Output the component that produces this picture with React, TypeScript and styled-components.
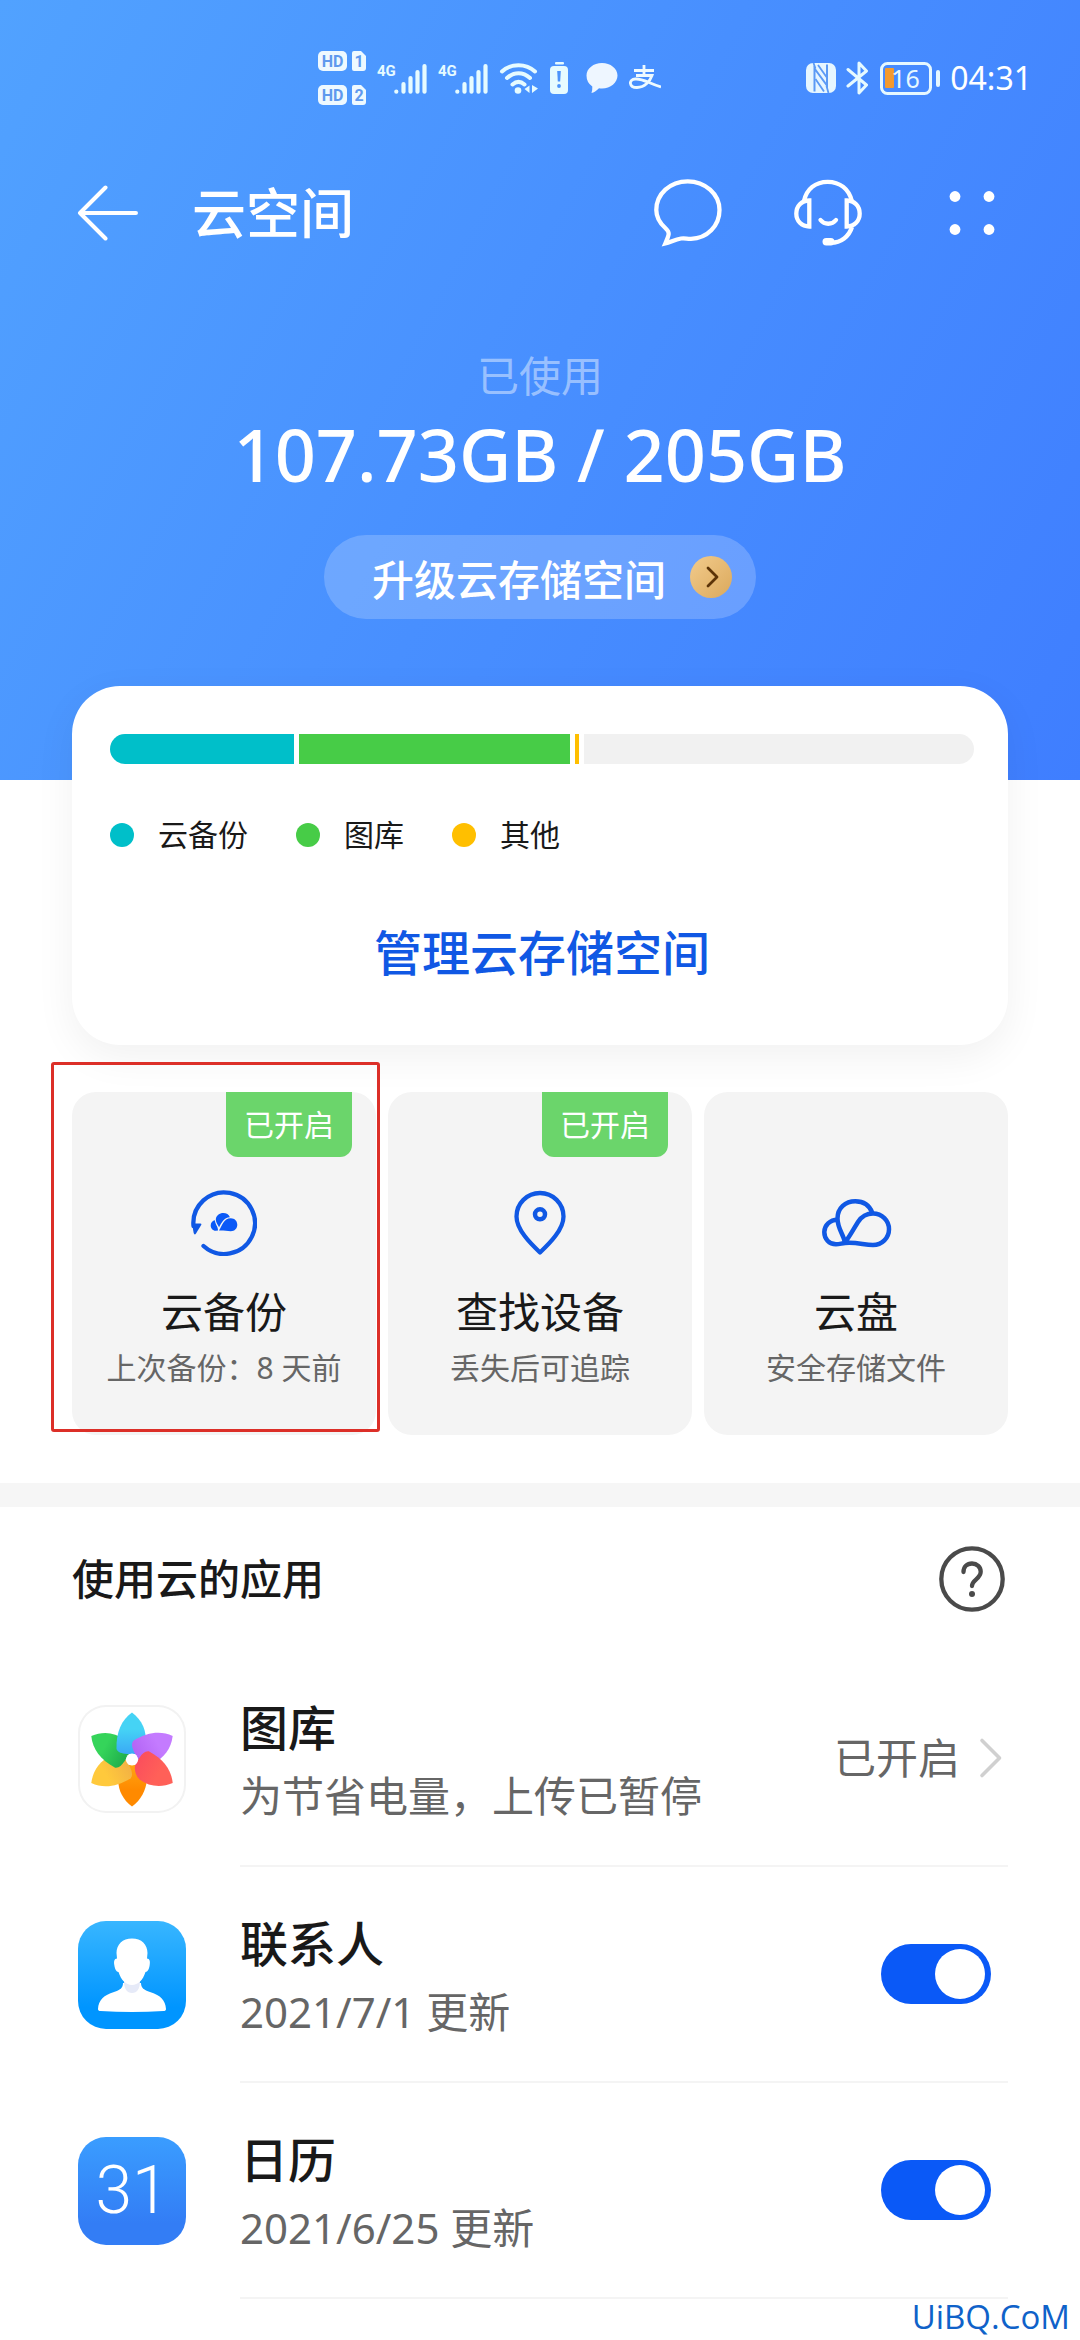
import React from "react";
import styled, { createGlobalStyle } from "styled-components";

const BLUE = "#0a59f7";
const INK_BLUE = "#1058e4";
const FONT = '"Noto Sans", "Noto Sans CJK SC", sans-serif';

const GlobalStyle = createGlobalStyle`
  *, *::before, *::after { box-sizing: border-box; }
  body { margin: 0; background: #fff; font-family: ${FONT}; color: #191919; }
  button { font: inherit; color: inherit; border: 0; padding: 0; background: none; cursor: pointer; }
  h1, h2, h3, p, ul { margin: 0; padding: 0; }
  svg { display: block; flex: none; }
`;

const Page = styled.div`
  min-height: 100vh;
  display: flex;
  flex-direction: column;
  background: #fff;
`;

const Hero = styled.header`
  display: flex;
  flex-direction: column;
  padding-bottom: 161px;
  color: #fff;
  background: linear-gradient(118deg, #51a2ff 0%, #488fff 50%, #3f7eff 100%);
`;

const StatusBar = styled.div`
  height: 156px;
  display: flex;
  align-items: center;
  justify-content: space-between;
  padding: 0 48px 0 318px;
`;

const StatusGroup = styled.div<{ $gap: number }>`
  display: flex;
  align-items: center;
  gap: ${(p) => p.$gap}px;
`;

const Clock = styled.time`
  font-size: 32px;
  line-height: 40px;
`;

const NavBar = styled.nav`
  height: 114px;
  display: flex;
  align-items: center;
  padding: 0 72px;
`;

const IconButton = styled.button`
  display: grid;
  place-items: center;
  width: 72px;
  height: 72px;
`;

const PageTitle = styled.h1`
  flex: 1;
  padding-left: 48px;
  font-size: 54px;
  line-height: 76px;
  font-weight: 500;
`;

const NavActions = styled.div`
  display: flex;
  gap: 72px;
`;

const Usage = styled.section`
  display: flex;
  flex-direction: column;
  align-items: center;
  padding-top: 76px;
`;

const UsageLabel = styled.p`
  font-size: 42px;
  line-height: 60px;
  color: rgba(255, 255, 255, 0.46);
`;

const UsageValue = styled.p`
  margin-top: 6px;
  font-size: 72px;
  line-height: 84px;
  font-weight: 500;
`;

const UpgradeButton = styled.button`
  display: flex;
  align-items: center;
  gap: 24px;
  height: 84px;
  margin-top: 39px;
  padding: 0 24px 0 48px;
  border-radius: 42px;
  font-size: 42px;
  font-weight: 500;
  background: rgba(255, 255, 255, 0.2);
`;

const Main = styled.main`
  display: flex;
  flex-direction: column;
`;

const StorageCard = styled.section`
  margin: -94px 72px 0;
  padding: 48px 34px 56px 38px;
  border-radius: 48px;
  background: #fff;
  box-shadow: 0 12px 40px rgba(0, 0, 0, 0.06);
`;

const Meter = styled.div`
  display: flex;
  gap: 5px;
  height: 30px;
  border-radius: 15px;
  overflow: hidden;
`;

const MeterPart = styled.span<{ $color: string; $share: number }>`
  flex: ${(p) => p.$share} 1 0;
  background: ${(p) => p.$color};
`;

const Legend = styled.ul`
  display: flex;
  gap: 48px;
  margin-top: 49px;
  list-style: none;
`;

const LegendItem = styled.li<{ $color: string }>`
  display: flex;
  align-items: center;
  gap: 24px;
  font-size: 30px;
  line-height: 44px;
  &::before {
    content: "";
    width: 24px;
    height: 24px;
    border-radius: 50%;
    background: ${(p) => p.$color};
  }
`;

const ManageButton = styled.button`
  display: block;
  margin: 60px auto 0;
  font-size: 48px;
  line-height: 72px;
  font-weight: 500;
  color: ${INK_BLUE};
`;

const Tiles = styled.section`
  display: grid;
  grid-template-columns: repeat(3, 1fr);
  gap: 12px;
  padding: 47px 72px 48px;
`;

const Tile = styled.button`
  position: relative;
  display: flex;
  flex-direction: column;
  align-items: center;
  padding: 98px 12px 45px;
  border-radius: 24px;
  background: #f4f4f4;
`;

const TileTitle = styled.span`
  margin-top: 28px;
  font-size: 42px;
  line-height: 56px;
`;

const TileNote = styled.span`
  margin-top: 6px;
  font-size: 30px;
  line-height: 44px;
  color: #666;
`;

const Badge = styled.span`
  position: absolute;
  top: 0;
  right: 24px;
  padding: 0 18px;
  border-radius: 0 0 12px 12px;
  font-size: 30px;
  line-height: 65px;
  color: #fff;
  background: #6bd56b;
`;

const Highlight = styled.span`
  position: absolute;
  inset: -30px -4px 3px -21px;
  border: 3px solid #dc2f28;
  border-radius: 3px;
  pointer-events: none;
`;

const Band = styled.div`
  height: 24px;
  background: #f6f6f6;
`;

const SectionHead = styled.div`
  display: flex;
  align-items: center;
  justify-content: space-between;
  height: 144px;
  padding: 0 72px;
`;

const SectionTitle = styled.h2`
  font-size: 42px;
  line-height: 60px;
  font-weight: 500;
`;

const AppList = styled.ul`
  list-style: none;
  padding: 0 72px 0 78px;
`;

const AppRow = styled.li`
  display: flex;
  align-items: center;
  gap: 54px;
  height: 216px;
`;

const AppIcon = styled.div<{ $bg: string; $outlined?: boolean }>`
  flex: none;
  display: grid;
  place-items: center;
  width: 108px;
  height: 108px;
  border-radius: 28px;
  overflow: hidden;
  background: ${(p) => p.$bg};
  box-shadow: ${(p) => (p.$outlined ? "inset 0 0 0 2px #f2f2f2" : "none")};
`;

const CalendarDay = styled.span`
  font-family: Roboto, sans-serif;
  font-size: 66px;
  line-height: 100px;
  font-weight: 300;
  color: #fff;
`;

const RowBody = styled.div`
  flex: 1;
  align-self: stretch;
  display: flex;
  align-items: center;
  justify-content: space-between;
  border-bottom: 2px solid #f4f4f4;
`;

const RowText = styled.div`
  display: flex;
  flex-direction: column;
`;

const RowTitle = styled.label`
  font-size: 48px;
  line-height: 76px;
  font-weight: 500;
`;

const RowNote = styled.span`
  font-size: 42px;
  line-height: 60px;
  color: #666;
`;

const RowLink = styled.button`
  display: flex;
  align-items: center;
  gap: 18px;
  padding-right: 4px;
  font-size: 42px;
  line-height: 60px;
  color: #666;
`;

const Switch = styled.input`
  appearance: none;
  width: 110px;
  height: 60px;
  margin: 0 17px 0 0;
  padding: 5px 6px;
  display: flex;
  justify-content: flex-start;
  border-radius: 30px;
  background: #ccc;
  cursor: pointer;
  &::before {
    content: "";
    width: 50px;
    height: 50px;
    border-radius: 50%;
    background: #fff;
  }
  &:checked {
    justify-content: flex-end;
    background: ${BLUE};
  }
`;

const Footer = styled.footer`
  padding: 0 10px;
  text-align: right;
  font-family: "Open Sans", "Noto Sans", sans-serif;
  font-size: 33px;
  line-height: 36px;
  font-weight: 500;
  color: #0f62c9;
`;

const HdIcon = () => (
  <svg width="48" height="56" viewBox="0 0 48 56" fontFamily="Roboto, sans-serif" fontWeight="700" fill="#eef9ff">
    {[0, 34].map((y, i) => (
      <g key={y} transform={`translate(0 ${y})`}>
        <rect x="0" y="1" width="29" height="20" rx="5" />
        <path d="M36 1h7l5 5v12q0 3-3 3h-9q-2 0-2-2V3q0-2 2-2z" />
        <text x="14.500" y="17" textAnchor="middle" fontSize="16" fill="#5f99ee">HD</text>
        <text x="41" y="17" textAnchor="middle" fontSize="16" fill="#5f99ee">{i + 1}</text>
      </g>
    ))}
  </svg>
);

const SignalIcon = () => (
  <svg width="50" height="34" viewBox="0 0 50 34" fill="#e6fbff">
    <text x="0" y="15" fontFamily="Roboto, sans-serif" fontWeight="700" fontSize="15">4G</text>
    <g stroke="#e6fbff" strokeWidth="4.200" strokeLinecap="round">
      <path d="M19.300 30.500v.2M26.500 23v7.700M33.500 17v13.700M40.500 11v19.700M47.500 5v25.700" />
    </g>
  </svg>
);

const WifiIcon = () => (
  <svg width="40" height="34" viewBox="0 0 40 34" fill="none" stroke="#e6fbff" strokeWidth="4" strokeLinecap="round">
    <path d="M3 10.500C12 2 27 2 36 10.500M8 17c7-6.500 16-6.500 23 0M13.500 23.500c4-3.500 8-3.500 12 0" />
    <circle cx="19" cy="29.500" r="3.300" fill="#e6fbff" stroke="none" />
    <path d="M30.500 24.500v7.500l-5-4zM33 24v8l6-4.500z" fill="#e6fbff" stroke="none" />
  </svg>
);

const BatteryAlertIcon = () => (
  <svg width="18" height="34" viewBox="0 0 18 34" fill="#e6fbff">
    <rect x="5" y="1" width="9" height="2.500" rx="1" />
    <rect y="5" width="18" height="28" rx="4" />
    <path d="M7.200 10h3.600l-.6 10.500H7.800z" fill="#4c94fb" />
    <circle cx="9" cy="25" r="1.900" fill="#4c94fb" />
  </svg>
);

const BubbleIcon = () => (
  <svg width="32" height="32" viewBox="0 0 32 32" fill="#eef6ff">
    <path d="M16 1C24.500 1 31.500 6.500 31.500 13.500S24.500 26.500 16 26.500q-1.500 0-3-.2Q9 30.500 5.500 31q1-2.500.8-6.500Q.5 20.500.5 13.500C.5 6.500 7.500 1 16 1z" />
  </svg>
);

const PayIcon = () => (
  <svg width="32" height="28" viewBox="0 0 32 28" fill="none" stroke="#eefaff" strokeWidth="2.800">
    <path d="M5 6.500H25M15 1v10.500M7 11.500h16C21 17 16 23.500 8 23.500c-8 0-9-8-1.500-8.500C14 14.500 20 19.500 32 23" />
  </svg>
);

const NfcIcon = () => (
  <svg width="30" height="30" viewBox="0 0 30 30">
    <rect width="30" height="30" rx="7" fill="#e6f6ff" />
    <path d="M8.500 28.500V5.500l12.500 17V1.500" fill="none" stroke="#5b9af5" strokeWidth="2" />
    <path d="M7.500 0l2 5.500M22.500 30l-2-7M12 2l8.500 12M9.500 16l8.500 12.500" stroke="#5b9af5" strokeWidth="1.800" />
  </svg>
);

const BluetoothIcon = () => (
  <svg width="24" height="34" viewBox="0 0 24 34" fill="none" stroke="#e6faff" strokeWidth="3" strokeLinejoin="round" strokeLinecap="round">
    <path d="M2 8.500 20.500 24 13 32V2l7.500 8L2 25" />
  </svg>
);

const BatteryIcon = () => (
  <svg width="60" height="34" viewBox="0 0 60 34">
    <rect x="1.500" y="2.500" width="49" height="30" rx="6" fill="none" stroke="#e6f8ff" strokeWidth="3" />
    <rect x="56" y="9" width="4" height="17" rx="2" fill="#e6f8ff" />
    <rect x="5" y="7" width="9" height="20" rx="1" fill="#f39a2e" />
    <text x="25.500" y="26.500" textAnchor="middle" fill="#e6f8ff" fontFamily={FONT} fontSize="25">16</text>
  </svg>
);

const BackIcon = () => (
  <svg width="62" height="56" viewBox="0 0 62 56" fill="none" stroke="#fff" strokeWidth="4" strokeLinecap="round" strokeLinejoin="round">
    <path d="M28.500 2.500 3 28l25.500 25.500M3 28h56" />
  </svg>
);

const ChatIcon = () => (
  <svg width="74" height="68" viewBox="-6 0 74 68" fill="none" stroke="#fff" strokeWidth="4.300">
    <path d="M27 59.500C31 58.800 33 60 37 59.800 53 59.500 65.500 47 65.500 31 65.500 15 51 2.300 33.700 2.300 16 2.300 2.300 15 2.300 31c0 8 4 13.500 9 18 5 4.500 4 6.500 0 15.500 5-1 9.500-4 15.700-5z" />
  </svg>
);

const SupportIcon = () => (
  <svg width="68" height="68" viewBox="0 0 68 68" fill="none" stroke="#fff" strokeWidth="4.300">
    <path d="M10 22C12.500 10 21.500 2.800 33.700 2.800S55 10 57.800 22" />
    <path d="M15.300 21.500v26C7.500 47.500 2.300 42 2.300 34.500s5.200-13 13-13zM52.700 21.500v26c7.800 0 13-5.500 13-13s-5.200-13-13-13z" />
    <path d="M58 48c-3 9.500-11 15.700-21 15.700" />
    <path d="M26.500 41c4 5 11.500 5 15.500 0" strokeLinecap="round" />
    <rect x="28.500" y="59" width="12" height="7.500" rx="3.700" fill="#fff" stroke="none" />
  </svg>
);

const MoreIcon = () => (
  <svg width="68" height="68" viewBox="0 0 68 68" fill="#fff">
    <circle cx="17" cy="17.500" r="5.400" />
    <circle cx="51" cy="17.500" r="5.400" />
    <circle cx="17" cy="50.500" r="5.400" />
    <circle cx="51" cy="50.500" r="5.400" />
  </svg>
);

const GoldArrow = () => (
  <svg width="42" height="42" viewBox="0 0 42 42">
    <defs>
      <linearGradient id="gold" x1="0" y1="0" x2="1" y2="1">
        <stop offset="0" stopColor="#f2cb8c" />
        <stop offset="1" stopColor="#dba95c" />
      </linearGradient>
    </defs>
    <circle cx="21" cy="21" r="21" fill="url(#gold)" />
    <path d="M18 12l9 9-9 9" fill="none" stroke="#5c3408" strokeWidth="2.800" strokeLinecap="round" strokeLinejoin="round" />
  </svg>
);

const BackupIcon = () => (
  <svg width="66" height="66" viewBox="0 0 66 66">
    <path d="M2.500 36A30.800 30.800 0 1 1 12.500 56" fill="none" stroke={INK_BLUE} strokeWidth="4.300" strokeLinecap="round" />
    <path d="M1 33.500h8.500q1.500 0 .7 1.500L5 43.500q-1.500 2-2.300-.5z" fill={INK_BLUE} />
    <g fill={BLUE}>
      <path d="M24 30.200c-2.500.3-4.300 2.500-4.300 5.200s2 5.300 5 5.300l2.300-.2c.2-3.800-3-6.500-3-10.300z" />
      <path d="M24.800 29.500c.2-4 3.800-6.500 7.500-6.500 3 0 5.800 1.600 6.600 4.200-6 .4-8 4.800-10.800 10-1.400-2.500-3.300-4.900-3.300-7.700z" />
      <path d="M28 40.500c3-4.500 4.500-12.300 11.800-12.300 3.900 0 6.500 2.900 6.500 6.500s-2.700 6.500-6.500 6.500c-4 0-7-.9-11.800-.7z" />
    </g>
  </svg>
);

const PinIcon = () => (
  <svg width="54" height="66" viewBox="0 0 54 66" fill="none" stroke={INK_BLUE} strokeWidth="4.300" strokeLinejoin="round">
    <path d="M27 62.500C17 53 3.500 39.500 3.500 26.500a23.500 23.500 0 0 1 47 0c0 13-13.500 26.500-23.500 36z" />
    <circle cx="27" cy="24.300" r="5" strokeWidth="4.500" />
  </svg>
);

const CloudIcon = () => (
  <svg width="74" height="66" viewBox="-3 0 74 66" fill="none" stroke={INK_BLUE} strokeWidth="4.500" strokeLinejoin="round">
    <path d="M23 52.500C28 46 31 40 36 32c3.500-5.500 8.500-8.500 15-8.500 9 0 16 7 16 15.700S60 55 51 55c-9 0-16-3-28-2-3 .2-5.500 1.300-9 1.300C7 54.300 2.300 48.700 2.300 42S8 29.700 15.500 29.700" />
    <path d="M23 52.500c-1.500-8-7.500-14-7.500-24C15.500 18 23.500 11.300 33.300 11.300c8 0 14.200 4.200 17 11.500" />
  </svg>
);

const HelpIcon = () => (
  <svg width="66" height="66" viewBox="0 0 66 66" fill="none" stroke="#4a4a4a" strokeWidth="4.300" strokeLinecap="round">
    <circle cx="33" cy="33" r="30.700" />
    <path d="M24.500 26c0-5 3.500-8.500 8.500-8.500s8.700 3.500 8.700 8.300c0 7.200-8.700 7.700-8.700 14.200" />
    <circle cx="33" cy="48" r="3" fill="#4a4a4a" stroke="none" />
  </svg>
);

const ChevronIcon = () => (
  <svg width="26" height="42" viewBox="0 0 26 42" fill="none" stroke="#d0d0d0" strokeWidth="3.600" strokeLinecap="round" strokeLinejoin="round">
    <path d="M4 3.500 21.500 21 4 38.500" />
  </svg>
);

const PETAL = "M54 7.500C64 15 69 26 67.500 38 66 44 61 48 57 49H49C43.500 48.500 40 47.500 38.500 44 38 27 43.500 15 54 7.500z";
const PETALS = [
  { turn: 180, from: "#ff8a00", to: "#ffa412" },
  { turn: 240, from: "#ffc93c", to: "#f3b244" },
  { turn: 300, from: "#35d45a", to: "#1fae4c" },
  { turn: 0, from: "#45d3f5", to: "#3aa9f5" },
  { turn: 60, from: "#c47bff", to: "#b364f5" },
  { turn: 120, from: "#ff6058", to: "#fb4f5c" },
];

const GalleryIcon = () => (
  <svg width="108" height="108" viewBox="0 0 108 108">
    <defs>
      {PETALS.map((p) => (
        <linearGradient key={p.turn} id={`petal${p.turn}`} x1="0" y1="0" x2="0" y2="1">
          <stop offset="0.400" stopColor={p.from} />
          <stop offset="1" stopColor={p.to} />
        </linearGradient>
      ))}
    </defs>
    {PETALS.map((p) => (
      <path key={p.turn} d={PETAL} fill={`url(#petal${p.turn})`} transform={`rotate(${p.turn} 54 54.500)`} />
    ))}
    <circle cx="54" cy="54.500" r="6" fill="#fff" />
  </svg>
);

const ContactIcon = () => (
  <svg width="108" height="108" viewBox="0 0 108 108" fill="#fff">
    <path d="M45 62h18c0 5 3 7 9 9 10 3 15.500 8 16 17 0 1.500-1 2-2.500 2-21 1.300-42 1.300-63 0-1.500 0-2.500-.5-2.500-2 .5-9 6-14 16-17 6-2 9-4 9-9z" />
    <path d="M46 60h16c0 8-3 12-8 12s-8-4-8-12z" fill="#e6eaf8" />
    <path d="M54 17.500c9.500 0 15.500 6 15.500 14.500l-.5 5.500c2.800 0 3.300 3 2.700 6.500-.6 4-2 7-4.200 7C65 59 60 64 54 64s-11-5-13.500-13c-2.200 0-3.600-3-4.200-7-.6-3.500-.1-6.500 2.700-6.500l-.5-5.500c0-8.500 6-14.500 15.500-14.500z" />
  </svg>
);

const segments = [
  { name: "云备份", color: "#00bfc9", share: 184 },
  { name: "图库", color: "#47cc47", share: 271 },
  { name: "其他", color: "#ffbf00", share: 4 },
];

const tiles = [
  { title: "云备份", note: "上次备份：8 天前", icon: <BackupIcon />, on: true, marked: true },
  { title: "查找设备", note: "丢失后可追踪", icon: <PinIcon />, on: true },
  { title: "云盘", note: "安全存储文件", icon: <CloudIcon /> },
];

const apps = [
  {
    id: "gallery",
    title: "图库",
    note: "为节省电量，上传已暂停",
    icon: <AppIcon $bg="#fff" $outlined><GalleryIcon /></AppIcon>,
    link: true,
  },
  {
    id: "contacts",
    title: "联系人",
    note: "2021/7/1 更新",
    icon: <AppIcon $bg="linear-gradient(#38b6ff, #0095ff 80%)"><ContactIcon /></AppIcon>,
  },
  {
    id: "calendar",
    title: "日历",
    note: "2021/6/25 更新",
    icon: <AppIcon $bg="linear-gradient(#3a9dff, #337df5 80%)"><CalendarDay>31</CalendarDay></AppIcon>,
  },
];

export default function App() {
  return (
    <Page lang="zh-CN">
      <GlobalStyle />
      <Hero>
        <StatusBar>
          <StatusGroup $gap={11}>
            <HdIcon />
            <SignalIcon />
            <SignalIcon />
            <WifiIcon />
            <StatusGroup $gap={18}>
              <BatteryAlertIcon />
              <BubbleIcon />
            </StatusGroup>
            <PayIcon />
          </StatusGroup>
          <StatusGroup $gap={10}>
            <NfcIcon />
            <BluetoothIcon />
            <BatteryIcon />
            <Clock>04:31</Clock>
          </StatusGroup>
        </StatusBar>
        <NavBar>
          <IconButton aria-label="返回"><BackIcon /></IconButton>
          <PageTitle>云空间</PageTitle>
          <NavActions>
            <IconButton aria-label="消息"><ChatIcon /></IconButton>
            <IconButton aria-label="客服"><SupportIcon /></IconButton>
            <IconButton aria-label="更多"><MoreIcon /></IconButton>
          </NavActions>
        </NavBar>
        <Usage>
          <UsageLabel>已使用</UsageLabel>
          <UsageValue>107.73GB / 205GB</UsageValue>
          <UpgradeButton>
            升级云存储空间
            <GoldArrow />
          </UpgradeButton>
        </Usage>
      </Hero>

      <Main>
        <StorageCard>
          <Meter>
            {segments.map((s) => (
              <MeterPart key={s.name} $color={s.color} $share={s.share} />
            ))}
            <MeterPart $color="#f1f1f1" $share={390} />
          </Meter>
          <Legend>
            {segments.map((s) => (
              <LegendItem key={s.name} $color={s.color}>{s.name}</LegendItem>
            ))}
          </Legend>
          <ManageButton>管理云存储空间</ManageButton>
        </StorageCard>

        <Tiles>
          {tiles.map((t) => (
            <Tile key={t.title}>
              {t.on && <Badge>已开启</Badge>}
              {t.icon}
              <TileTitle>{t.title}</TileTitle>
              <TileNote>{t.note}</TileNote>
              {t.marked && <Highlight />}
            </Tile>
          ))}
        </Tiles>

        <Band />

        <section>
          <SectionHead>
            <SectionTitle>使用云的应用</SectionTitle>
            <IconButton aria-label="帮助"><HelpIcon /></IconButton>
          </SectionHead>
          <AppList>
            {apps.map((a) => (
              <AppRow key={a.id}>
                {a.icon}
                <RowBody>
                  <RowText>
                    <RowTitle htmlFor={a.id}>{a.title}</RowTitle>
                    <RowNote>{a.note}</RowNote>
                  </RowText>
                  {a.link ? (
                    <RowLink id={a.id}>
                      已开启
                      <ChevronIcon />
                    </RowLink>
                  ) : (
                    <Switch id={a.id} type="checkbox" defaultChecked />
                  )}
                </RowBody>
              </AppRow>
            ))}
          </AppList>
        </section>
      </Main>
      <Footer>UiBQ.CoM</Footer>
    </Page>
  );
}
